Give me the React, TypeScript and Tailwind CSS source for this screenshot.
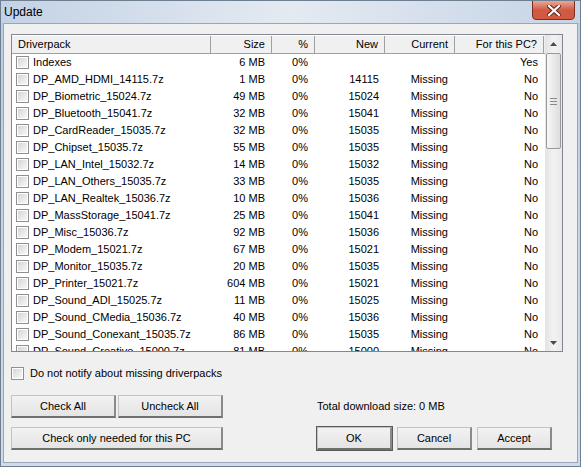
import React from "react";

// One row of the driverpack list
interface Pack {
  name: string;
  size: string;
  percent: string;
  fresh: string;
  current: string;
  forPc: string;
}

const packs: Pack[] = [
  { name: "Indexes", size: "6 MB", percent: "0%", fresh: "", current: "", forPc: "Yes" },
  { name: "DP_AMD_HDMI_14115.7z", size: "1 MB", percent: "0%", fresh: "14115", current: "Missing", forPc: "No" },
  { name: "DP_Biometric_15024.7z", size: "49 MB", percent: "0%", fresh: "15024", current: "Missing", forPc: "No" },
  { name: "DP_Bluetooth_15041.7z", size: "32 MB", percent: "0%", fresh: "15041", current: "Missing", forPc: "No" },
  { name: "DP_CardReader_15035.7z", size: "32 MB", percent: "0%", fresh: "15035", current: "Missing", forPc: "No" },
  { name: "DP_Chipset_15035.7z", size: "55 MB", percent: "0%", fresh: "15035", current: "Missing", forPc: "No" },
  { name: "DP_LAN_Intel_15032.7z", size: "14 MB", percent: "0%", fresh: "15032", current: "Missing", forPc: "No" },
  { name: "DP_LAN_Others_15035.7z", size: "33 MB", percent: "0%", fresh: "15035", current: "Missing", forPc: "No" },
  { name: "DP_LAN_Realtek_15036.7z", size: "10 MB", percent: "0%", fresh: "15036", current: "Missing", forPc: "No" },
  { name: "DP_MassStorage_15041.7z", size: "25 MB", percent: "0%", fresh: "15041", current: "Missing", forPc: "No" },
  { name: "DP_Misc_15036.7z", size: "92 MB", percent: "0%", fresh: "15036", current: "Missing", forPc: "No" },
  { name: "DP_Modem_15021.7z", size: "67 MB", percent: "0%", fresh: "15021", current: "Missing", forPc: "No" },
  { name: "DP_Monitor_15035.7z", size: "20 MB", percent: "0%", fresh: "15035", current: "Missing", forPc: "No" },
  { name: "DP_Printer_15021.7z", size: "604 MB", percent: "0%", fresh: "15021", current: "Missing", forPc: "No" },
  { name: "DP_Sound_ADI_15025.7z", size: "11 MB", percent: "0%", fresh: "15025", current: "Missing", forPc: "No" },
  { name: "DP_Sound_CMedia_15036.7z", size: "40 MB", percent: "0%", fresh: "15036", current: "Missing", forPc: "No" },
  { name: "DP_Sound_Conexant_15035.7z", size: "86 MB", percent: "0%", fresh: "15035", current: "Missing", forPc: "No" },
  { name: "DP_Sound_Creative_15000.7z", size: "81 MB", percent: "0%", fresh: "15000", current: "Missing", forPc: "No" },
];

// Win7 style checkbox
const CheckBox = () => (
  <span className="w-[13px] h-[13px] shrink-0 border border-[#8e8f8f] bg-white p-px">
    <span className="block w-full h-full bg-gradient-to-br from-[#d6d6d6] to-[#f8f8f8]" />
  </span>
);

// Push button
const Button = ({ label, width, isDefault }: { label: string; width: string; isDefault?: boolean }) => (
  <button
    className={`${width} h-[23px] shrink-0 bg-gradient-to-b from-[#f2f2f2] to-[#e4e4e4] border border-[#c3c3c3] border-b-2 border-r-2 border-b-[#6f6f6f] border-r-[#8a8a8a] text-black ${
      isDefault ? "outline outline-1 outline-[#5a5a5a]" : ""
    }`}
  >
    {label}
  </button>
);

// Header cell
const Head = ({ label, width, left }: { label: string; width: string; left?: boolean }) => (
  <div
    className={`${width} h-full flex items-center shrink-0 border-r border-[#a0a0a0] ${
      left ? "pl-[6px]" : "justify-end pr-[6px]"
    }`}
  >
    {label}
  </div>
);

export default function App() {
  return (
    <div className="w-[581px] h-[467px] bg-gradient-to-b from-[#bccce0] to-[#cfdbea] border border-[#6f7f92] flex flex-col font-['Liberation_Sans',Arial,sans-serif] text-[11px] text-black overflow-hidden">
      {/* Title bar */}
      <div className="h-[22px] shrink-0 relative flex items-center pl-[3px] bg-gradient-to-r from-[#c3d2e5] via-[#e4eaf2] to-[#c6d4e6]">
        <span className="text-[12px] text-black">Update</span>
        {/* Close button */}
        <div className="absolute top-[-1px] right-[5px] w-[43px] h-[20px] rounded-b-[4px] border border-[#7b2d22] bg-gradient-to-b from-[#e9a896] via-[#cf5a43] to-[#d5583f] flex items-center justify-center">
          <svg width="14" height="11" viewBox="0 0 14 11">
            <path d="M2 1 L12 10 M12 1 L2 10" stroke="#5a2016" strokeWidth="4" strokeLinecap="square" />
            <path d="M2 1 L12 10 M12 1 L2 10" stroke="#ffffff" strokeWidth="2.2" strokeLinecap="square" />
          </svg>
        </div>
      </div>

      {/* Client area */}
      <div className="flex-1 mx-[2px] mb-[3px] border border-[#98a6b7] bg-[#f0f0f0] pl-[7px] pt-[10px] flex flex-col">
        {/* List view */}
        <div className="w-[552px] h-[318px] border border-[#828790] bg-white flex">
          <div className="w-[533px] flex flex-col overflow-hidden">
            {/* Header */}
            <div className="h-[19px] shrink-0 flex bg-[#f0f0f0] border-b border-[#a0a0a0] border-t border-t-white">
              <Head label="Driverpack" width="w-[199px]" left />
              <Head label="Size" width="w-[61px]" />
              <Head label="%" width="w-[43px]" />
              <Head label="New" width="w-[70px]" />
              <Head label="Current" width="w-[70px]" />
              <Head label="For this PC?" width="w-[89px]" />
            </div>
            {/* Rows */}
            {packs.map((p) => (
              <div key={p.name} className="h-[17px] shrink-0 flex items-center">
                <div className="w-[199px] shrink-0 flex items-center gap-[4px] pl-[4px]">
                  <CheckBox />
                  <span className="whitespace-nowrap">{p.name}</span>
                </div>
                <div className="w-[61px] shrink-0 text-right pr-[7px]">{p.size}</div>
                <div className="w-[43px] shrink-0 text-right pr-[7px]">{p.percent}</div>
                <div className="w-[70px] shrink-0 text-right pr-[6px]">{p.fresh}</div>
                <div className="w-[70px] shrink-0 text-right pr-[7px]">{p.current}</div>
                <div className="w-[89px] shrink-0 text-right pr-[6px]">{p.forPc}</div>
              </div>
            ))}
          </div>

          {/* Scrollbar */}
          <div className="w-[17px] shrink-0 flex flex-col bg-gradient-to-r from-[#e3e3e3] via-[#f2f2f2] to-[#e9e9e9]">
            <div className="h-[17px] flex items-center justify-center">
              <svg width="7" height="4" viewBox="0 0 7 4">
                <path d="M0 4 L3.5 0 L7 4 Z" fill="#4b4b4b" />
              </svg>
            </div>
            <div className="h-[96px] mx-[1px] mt-px rounded-[2px] border border-[#9a9a9a] bg-gradient-to-r from-[#f6f6f6] to-[#dedede] flex flex-col items-center justify-center gap-[2px]">
              <span className="block w-[7px] h-px bg-[#8a8a8a]" />
              <span className="block w-[7px] h-px bg-[#8a8a8a]" />
              <span className="block w-[7px] h-px bg-[#8a8a8a]" />
            </div>
            <div className="flex-1" />
            <div className="h-[17px] flex items-center justify-center">
              <svg width="7" height="4" viewBox="0 0 7 4">
                <path d="M0 0 L7 0 L3.5 4 Z" fill="#4b4b4b" />
              </svg>
            </div>
          </div>
        </div>

        {/* Notify option */}
        <div className="mt-[15px] flex items-center gap-[6px] h-[13px]">
          <CheckBox />
          <span>Do not notify about missing driverpacks</span>
        </div>

        {/* Check buttons + total */}
        <div className="mt-[15px] flex items-center">
          <div className="w-[212px] flex gap-[2px]">
            <Button label="Check All" width="w-[105px]" />
            <Button label="Uncheck All" width="w-[105px]" />
          </div>
          <span className="ml-[94px]">Total download size: 0 MB</span>
        </div>

        {/* Bottom buttons */}
        <div className="mt-[9px] flex items-center">
          <Button label="Check only needed for this PC" width="w-[212px]" />
          <div className="ml-[94px] flex gap-[5px]">
            <Button label="OK" width="w-[75px]" isDefault />
            <Button label="Cancel" width="w-[75px]" />
            <Button label="Accept" width="w-[75px]" />
          </div>
        </div>
      </div>
    </div>
  );
}
